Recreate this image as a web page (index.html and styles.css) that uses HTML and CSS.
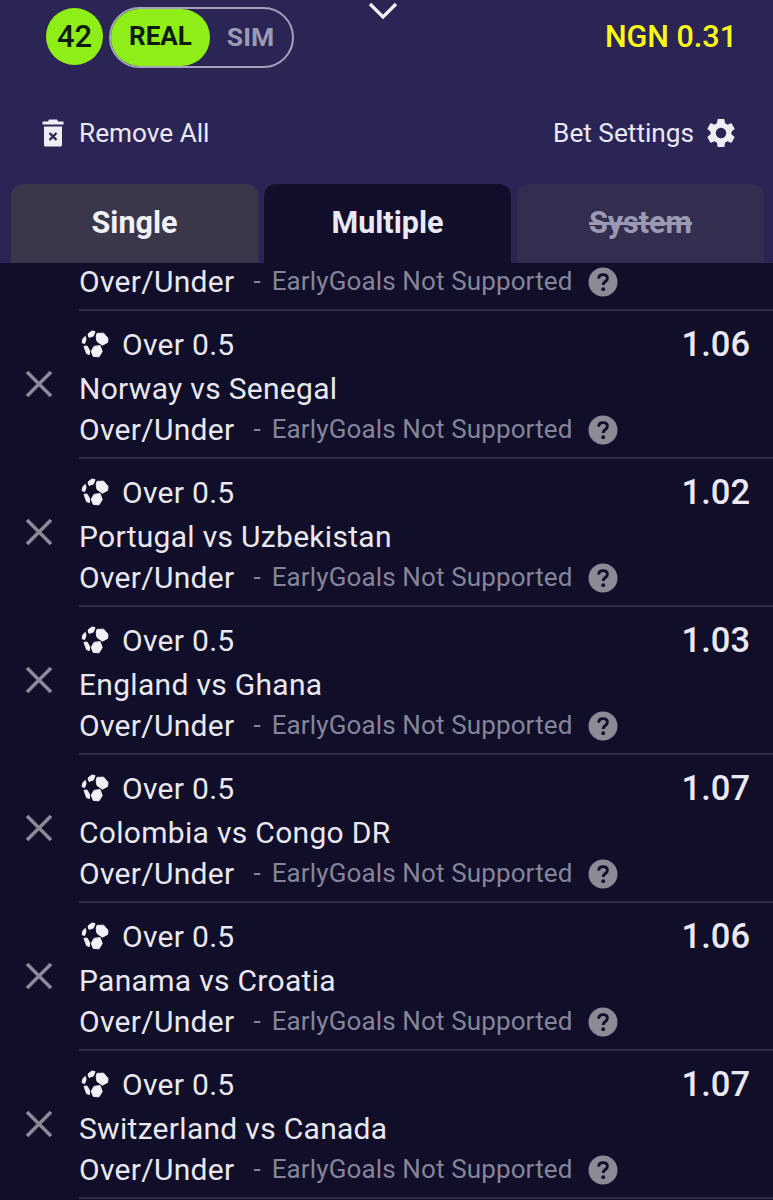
FILE: index.html
```html
<!DOCTYPE html>
<html lang="en">
<head>
    <meta charset="UTF-8">
    <meta name="viewport" content="width=device-width, initial-scale=1.0">
    <title>Betslip</title>
    <link rel="stylesheet" href="styles.css">
</head>
<body>
    <svg class="defs" width="0" height="0">
        <defs>
            <symbol id="ball" viewBox="0 0 28 28">
                <g fill="#f2f1f7" stroke="#f2f1f7" stroke-width="1" stroke-linejoin="round">
                    <path d="M7 4 L11 1 L14 1.6 L12.4 6 L8 7.4 Z"/>
                    <path d="M16 3.4 L22.6 3.2 L27 8.4 L26.6 12.4 L21.4 15.2 L16 11.4 L15.2 6.6 Z"/>
                    <path d="M1 12.6 L2 8.6 L4.4 6.4 L5 9.6 L3.6 13.6 Z"/>
                    <path d="M13 16.4 L19 15.6 L21.2 21.6 L18 26.8 L12.4 26.4 L10.2 21.4 Z"/>
                    <path d="M3 16.4 L6 16 L8.6 20.6 L8.4 24.6 L5.6 23.6 Z"/>
                </g>
            </symbol>
            <symbol id="cross" viewBox="0 0 28 28">
                <path d="M2 2 L26 26 M26 2 L2 26" fill="none" stroke="#8b8a99" stroke-width="3.6"/>
            </symbol>
            <symbol id="help" viewBox="0 0 30 30">
                <circle cx="15" cy="15" r="14.5" fill="#8b8a95"/>
                <path d="M10.6 11.6 C10.8 8.8 12.6 7.6 15 7.6 C17.6 7.6 19.4 9 19.4 11.2 C19.4 13 18.4 13.8 17 14.8 C15.8 15.6 15.2 16.2 15.2 18" fill="none" stroke="#100e28" stroke-width="2.9"/>
                <circle cx="15.2" cy="22.2" r="1.9" fill="#100e28"/>
            </symbol>
        </defs>
    </svg>

    <header class="head">
        <div class="top">
            <div class="count">42</div>
            <div class="mode">
                <span class="mode-real">REAL</span>
                <span class="mode-sim">SIM</span>
            </div>
            <svg class="chevron" width="30" height="18" viewBox="0 0 30 18">
                <path d="M2 2 L15 15 L28 2" fill="none" stroke="#f2f1f7" stroke-width="3.2"/>
            </svg>
            <div class="balance">NGN 0.31</div>
        </div>

        <div class="actions">
            <div class="remove">
                <svg width="22" height="28" viewBox="0 0 22 28">
                    <path fill="#eeedf4" d="M7 .5 H15 L16 2.5 H21.5 V5.5 H.5 V2.5 H6 Z"/>
                    <path fill="#eeedf4" d="M2 7.5 H20 V26 Q20 27.5 18.5 27.5 H3.5 Q2 27.5 2 26 Z"/>
                    <path d="M7.5 14 L14.5 21 M14.5 14 L7.5 21" fill="none" stroke="#2b2555" stroke-width="2.4"/>
                </svg>
                <span>Remove All</span>
            </div>
            <div class="settings">
                <span>Bet Settings</span>
                <svg width="30" height="30" viewBox="2.2 1.7 19.6 20.6">
                    <path fill="#eeedf4" fill-rule="evenodd" d="M19.14 12.94c.04-.3.06-.61.06-.94 0-.32-.02-.64-.07-.94l2.03-1.58a.49.49 0 0 0 .12-.61l-1.92-3.32a.49.49 0 0 0-.59-.22l-2.39.96c-.5-.38-1.03-.7-1.62-.94l-.36-2.54a.48.48 0 0 0-.48-.41h-3.84a.48.48 0 0 0-.47.41l-.36 2.54c-.59.24-1.13.57-1.62.94l-2.39-.96a.48.48 0 0 0-.59.22L2.74 8.87a.47.47 0 0 0 .12.61l2.03 1.58c-.05.3-.09.63-.09.94s.02.64.07.94l-2.03 1.58a.49.49 0 0 0-.12.61l1.92 3.32c.12.22.37.29.59.22l2.39-.96c.5.38 1.03.7 1.62.94l.36 2.54c.05.24.24.41.48.41h3.84c.24 0 .44-.17.47-.41l.36-2.54c.59-.24 1.13-.56 1.62-.94l2.39.96c.22.08.47 0 .59-.22l1.92-3.32a.47.47 0 0 0-.12-.61l-2.01-1.58zM12 15.6A3.6 3.6 0 1 1 12 8.4a3.6 3.6 0 0 1 0 7.2z"/>
                </svg>
            </div>
        </div>

        <nav class="tabs">
            <div class="tab">Single</div>
            <div class="tab tab-active">Multiple</div>
            <div class="tab tab-off">System</div>
        </nav>
    </header>

    <main class="list">
        <div class="bet bet-cut">
            <div class="bet-body">
                <div class="market">
                    <span>Over/Under</span>
                    <span class="dash">-</span>
                    <span class="note">EarlyGoals Not Supported</span>
                    <svg class="help" width="30" height="30"><use href="#help"/></svg>
                </div>
            </div>
        </div>

        <div class="bet">
            <svg class="remove-bet" width="28" height="28"><use href="#cross"/></svg>
            <div class="bet-body">
                <div class="pick">
                    <svg class="ball" width="28" height="28"><use href="#ball"/></svg>
                    <span>Over 0.5</span>
                    <span class="odds">1.06</span>
                </div>
                <div class="match">Norway vs Senegal</div>
                <div class="market">
                    <span>Over/Under</span>
                    <span class="dash">-</span>
                    <span class="note">EarlyGoals Not Supported</span>
                    <svg class="help" width="30" height="30"><use href="#help"/></svg>
                </div>
            </div>
        </div>

        <div class="bet">
            <svg class="remove-bet" width="28" height="28"><use href="#cross"/></svg>
            <div class="bet-body">
                <div class="pick">
                    <svg class="ball" width="28" height="28"><use href="#ball"/></svg>
                    <span>Over 0.5</span>
                    <span class="odds">1.02</span>
                </div>
                <div class="match">Portugal vs Uzbekistan</div>
                <div class="market">
                    <span>Over/Under</span>
                    <span class="dash">-</span>
                    <span class="note">EarlyGoals Not Supported</span>
                    <svg class="help" width="30" height="30"><use href="#help"/></svg>
                </div>
            </div>
        </div>

        <div class="bet">
            <svg class="remove-bet" width="28" height="28"><use href="#cross"/></svg>
            <div class="bet-body">
                <div class="pick">
                    <svg class="ball" width="28" height="28"><use href="#ball"/></svg>
                    <span>Over 0.5</span>
                    <span class="odds">1.03</span>
                </div>
                <div class="match">England vs Ghana</div>
                <div class="market">
                    <span>Over/Under</span>
                    <span class="dash">-</span>
                    <span class="note">EarlyGoals Not Supported</span>
                    <svg class="help" width="30" height="30"><use href="#help"/></svg>
                </div>
            </div>
        </div>

        <div class="bet">
            <svg class="remove-bet" width="28" height="28"><use href="#cross"/></svg>
            <div class="bet-body">
                <div class="pick">
                    <svg class="ball" width="28" height="28"><use href="#ball"/></svg>
                    <span>Over 0.5</span>
                    <span class="odds">1.07</span>
                </div>
                <div class="match">Colombia vs Congo DR</div>
                <div class="market">
                    <span>Over/Under</span>
                    <span class="dash">-</span>
                    <span class="note">EarlyGoals Not Supported</span>
                    <svg class="help" width="30" height="30"><use href="#help"/></svg>
                </div>
            </div>
        </div>

        <div class="bet">
            <svg class="remove-bet" width="28" height="28"><use href="#cross"/></svg>
            <div class="bet-body">
                <div class="pick">
                    <svg class="ball" width="28" height="28"><use href="#ball"/></svg>
                    <span>Over 0.5</span>
                    <span class="odds">1.06</span>
                </div>
                <div class="match">Panama vs Croatia</div>
                <div class="market">
                    <span>Over/Under</span>
                    <span class="dash">-</span>
                    <span class="note">EarlyGoals Not Supported</span>
                    <svg class="help" width="30" height="30"><use href="#help"/></svg>
                </div>
            </div>
        </div>

        <div class="bet">
            <svg class="remove-bet" width="28" height="28"><use href="#cross"/></svg>
            <div class="bet-body">
                <div class="pick">
                    <svg class="ball" width="28" height="28"><use href="#ball"/></svg>
                    <span>Over 0.5</span>
                    <span class="odds">1.07</span>
                </div>
                <div class="match">Switzerland vs Canada</div>
                <div class="market">
                    <span>Over/Under</span>
                    <span class="dash">-</span>
                    <span class="note">EarlyGoals Not Supported</span>
                    <svg class="help" width="30" height="30"><use href="#help"/></svg>
                </div>
            </div>
        </div>
    </main>
</body>
</html>
```

FILE: styles.css
```css
html, body {
    margin: 0;
    padding: 0;
    height: 1200px;
    overflow: hidden;
}

body {
    font-family: Roboto, "Liberation Sans", sans-serif;
    background-color: #100e28;
    color: #e9e8f0;
}

.defs {
    display: block;
    height: 0;
}

/* Header */
.head {
    height: 263px;
    background-color: #2b2555;
    display: flex;
    flex-direction: column;
    box-sizing: border-box;
}

.top {
    display: flex;
    align-items: flex-start;
    height: 74px;
    padding: 7px 36px 0 46px;
    box-sizing: border-box;
}

.count {
    width: 57px;
    height: 57px;
    margin-top: 1px;
    border-radius: 50%;
    background-color: #8fee18;
    color: #0d1c10;
    font-size: 31px;
    font-weight: 500;
    line-height: 57px;
    text-align: center;
    flex: none;
}

.mode {
    display: flex;
    width: 185px;
    height: 61px;
    margin-left: 6px;
    box-sizing: border-box;
    border: 2px solid #a4a1bd;
    border-radius: 31px;
    flex: none;
}

.mode-real {
    width: 99px;
    height: 57px;
    border-radius: 29px;
    background-color: #8fee18;
    color: #0d1c10;
    font-size: 26px;
    font-weight: 700;
    line-height: 55px;
    text-align: center;
}

.mode-sim {
    flex: 1;
    padding-right: 1px;
    color: #9c9ab2;
    font-size: 26.5px;
    font-weight: 700;
    line-height: 55px;
    text-align: center;
}

.chevron {
    margin: -5px 0 0 74px;
    flex: none;
}

.balance {
    margin-left: auto;
    padding-top: 12px;
    color: #fafa14;
    font-size: 30.5px;
    font-weight: 500;
    line-height: 36px;
}

.actions {
    display: flex;
    justify-content: space-between;
    align-items: center;
    height: 64px;
    margin-top: 27px;
    padding: 0 37px 0 42px;
}

.remove, .settings {
    display: flex;
    align-items: center;
    font-size: 26.2px;
    color: #e9e8f4;
}

.remove span {
    margin-left: 15px;
}

.settings span {
    margin-right: 12px;
}

.tabs {
    display: flex;
    gap: 6px;
    margin-top: 19px;
    padding: 0 9px 0 11px;
    flex: 1;
}

.tab {
    flex: 1;
    padding-top: 20px;
    border-radius: 12px 12px 0 0;
    background-color: #393749;
    color: #f2f1f7;
    font-size: 30.5px;
    font-weight: 700;
    line-height: 38px;
    text-align: center;
}

.tab-active {
    background-color: #100e28;
    color: #e9e8f4;
}

.tab-off {
    background-color: #332e4f;
    color: #9c9ab2;
    text-decoration: line-through;
}

/* Bets */
.bet {
    display: flex;
    align-items: center;
    position: relative;
    height: 148px;
    padding-left: 79px;
    box-sizing: border-box;
}

.bet-cut {
    height: 48px;
    align-items: flex-start;
}

.remove-bet {
    position: absolute;
    left: 25px;
    top: 59px;
}

.bet-body {
    flex: 1;
    height: 100%;
    border-bottom: 2px solid #2f2b4c;
    box-sizing: border-box;
}

.pick {
    display: flex;
    align-items: center;
    height: 44px;
    margin: 11px 0 1px;
    padding-right: 23px;
    font-size: 30px;
    letter-spacing: .3px;
}

.ball {
    margin: 0 13px 0 2px;
    flex: none;
}

.odds {
    margin-left: auto;
    color: #e9e8f4;
    font-size: 34.5px;
    font-weight: 500;
    letter-spacing: 0;
}

.match {
    height: 44px;
    font-size: 30px;
    letter-spacing: .3px;
    line-height: 44px;
}

.market {
    display: flex;
    align-items: center;
    height: 36px;
    font-size: 30px;
    letter-spacing: .3px;
}

.dash {
    margin-left: 19px;
    color: #85849a;
    font-size: 26px;
    letter-spacing: 0;
}

.note {
    margin-left: 11px;
    color: #85849a;
    font-size: 26px;
    letter-spacing: .13px;
}

.help {
    margin: 2px 0 0 15px;
    flex: none;
}
```
